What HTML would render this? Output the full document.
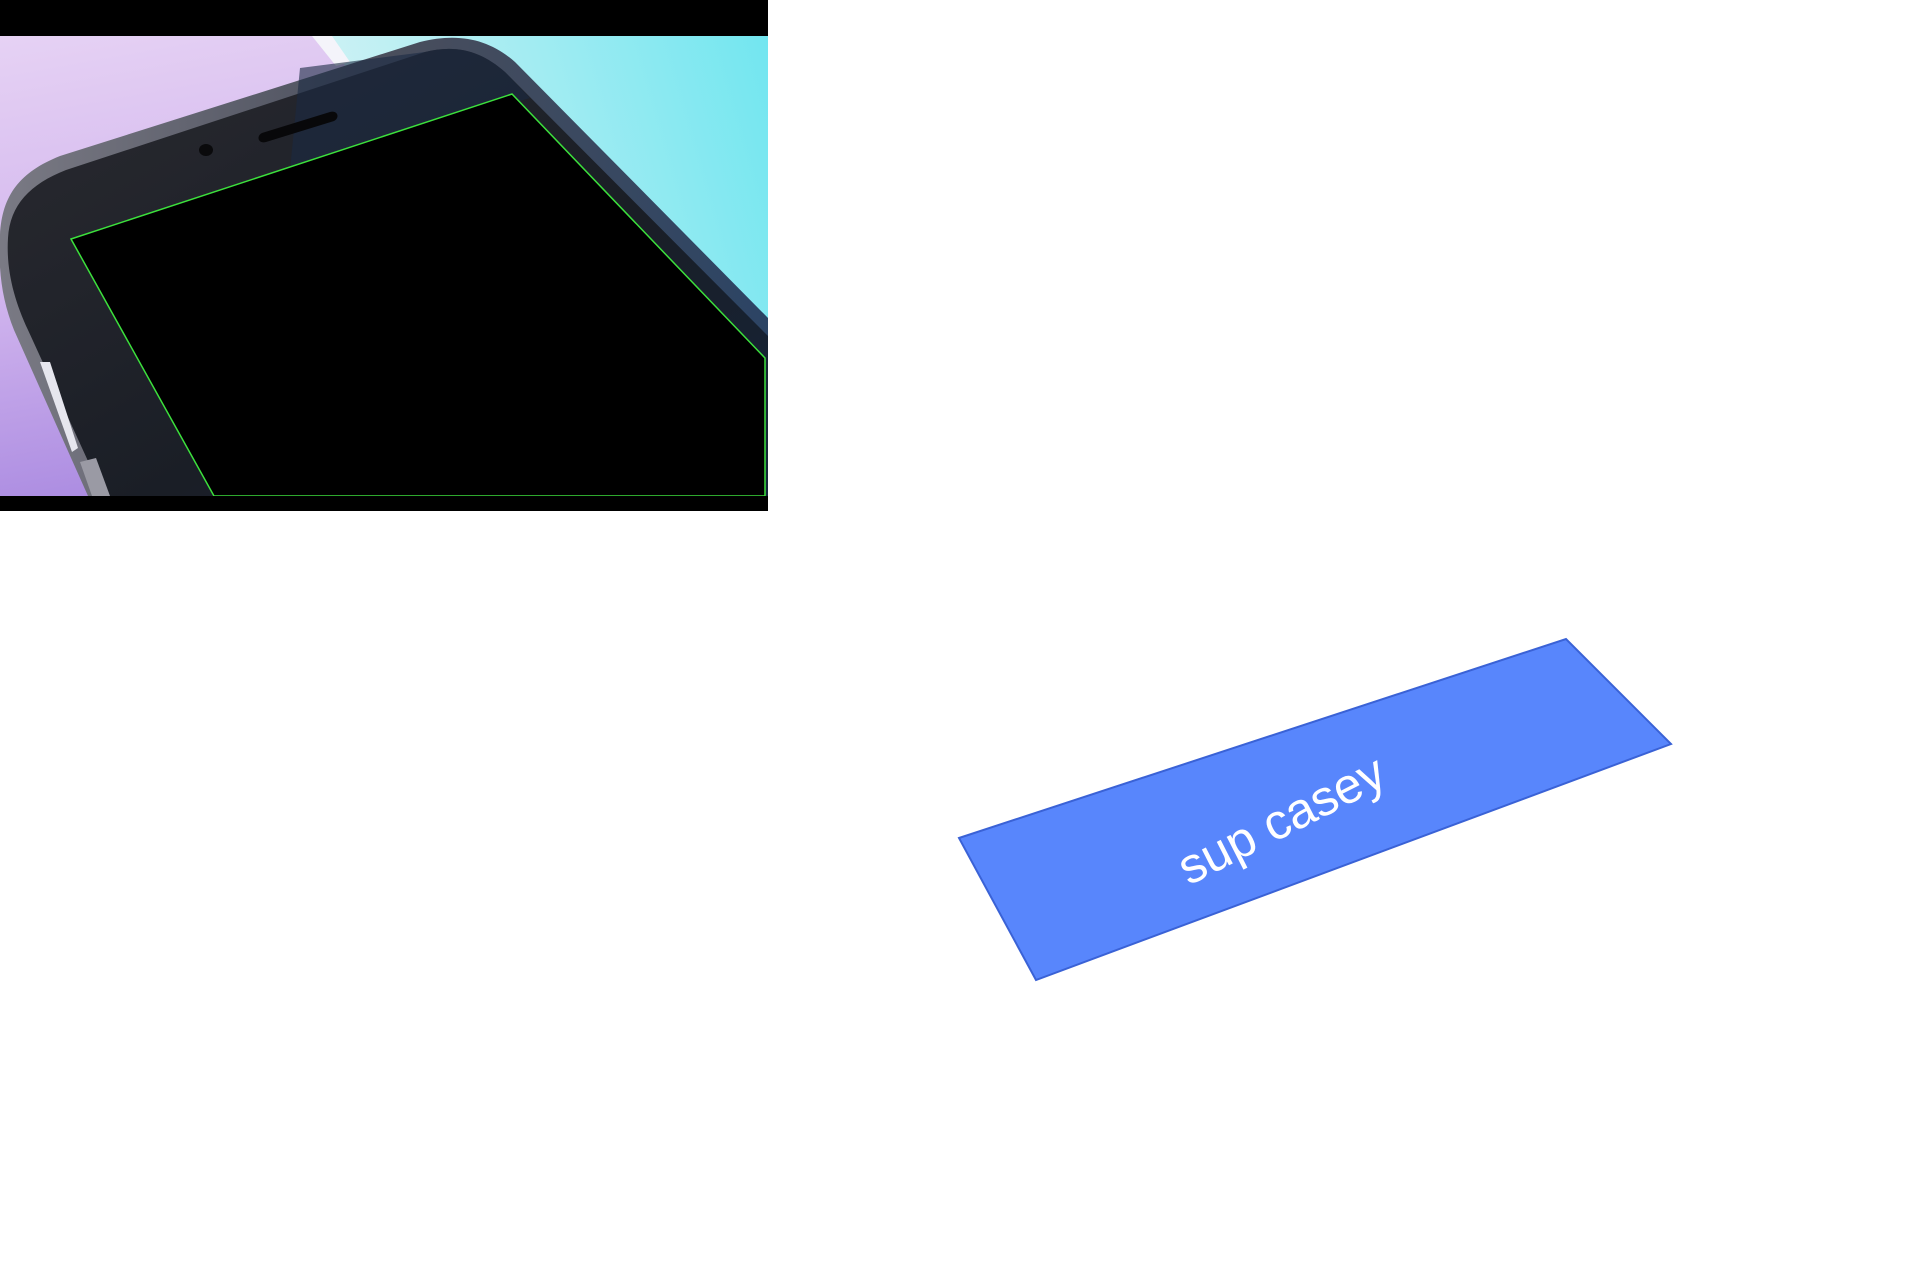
<!DOCTYPE html>
<html><head><meta charset="utf-8"><style>
html,body{margin:0;padding:0;background:#fff;width:1920px;height:1280px;overflow:hidden}
svg{display:block}
</style></head><body>
<svg width="1920" height="1280" viewBox="0 0 1920 1280" xmlns="http://www.w3.org/2000/svg">
<defs>
<linearGradient id="bgL" x1="0" y1="0" x2="0.3" y2="1">
<stop offset="0" stop-color="#e6d2f4"/><stop offset="0.5" stop-color="#d2b6ee"/><stop offset="1" stop-color="#a888e0"/>
</linearGradient>
<linearGradient id="bgR" x1="0" y1="0.3" x2="1" y2="0">
<stop offset="0" stop-color="#d2f2f4"/><stop offset="1" stop-color="#72e6f0"/>
</linearGradient>
<linearGradient id="body" x1="0" y1="0" x2="1" y2="1">
<stop offset="0" stop-color="#2a2a30"/><stop offset="0.6" stop-color="#1a1e26"/><stop offset="1" stop-color="#14243a"/>
</linearGradient>
<linearGradient id="rim" x1="0" y1="0" x2="1" y2="0">
<stop offset="0" stop-color="#7a7a84"/><stop offset="0.5" stop-color="#4a4e5c"/><stop offset="1" stop-color="#2c4464"/>
</linearGradient>
</defs>
<rect x="0" y="0" width="768" height="36" fill="#000"/>
<rect x="0" y="36" width="768" height="460" fill="url(#bgL)"/>
<polygon points="330,36 768,36 768,496 560,496" fill="url(#bgR)"/>
<polygon points="312,36 332,36 350,62 336,66" fill="#f4f4fa"/>
<path d="M0,235 C2,195 20,172 60,156 L420,42 C460,32 490,40 515,62 L768,318 L768,496 L88,496 L14,330 C2,300 -2,270 0,235 Z" fill="url(#rim)"/>
<path d="M8,238 C10,205 30,184 66,170 L425,52 C458,44 482,52 505,72 L768,336 L768,496 L104,496 L28,330 C14,300 6,270 8,238 Z" fill="url(#body)"/>
<path d="M300,68 L425,52 C458,44 482,52 505,72 L530,98 L290,170 Z" fill="#1a2a42" opacity="0.6"/>
<path d="M40,362 L50,362 L78,448 L72,452 Z" fill="#e6e6ee"/>
<path d="M80,462 L96,458 L110,496 L92,496 Z" fill="#9a9aa4"/>
<path d="M262,133 L330,112 C338,110 340,118 334,121 L266,142 C258,144 256,136 262,133 Z" fill="#08080a"/>
<ellipse cx="206" cy="150" rx="7" ry="6" fill="#0a0a0c"/>
<polygon points="71,239 512,94 765,358 765,496 214,496" fill="#000" stroke="#3ce03c" stroke-width="1.5"/>
<rect x="0" y="496" width="768" height="15" fill="#000"/>
<polygon points="959,838 1566,639 1671,744 1036,980" fill="#5886fc" stroke="#3a62d6" stroke-width="2"/>
<text x="0" y="0" transform="translate(1283,823) rotate(-27)" text-anchor="middle" dominant-baseline="middle" font-family="Liberation Sans, sans-serif" font-size="50" fill="#fff">sup casey</text>
</svg>
</body></html>
